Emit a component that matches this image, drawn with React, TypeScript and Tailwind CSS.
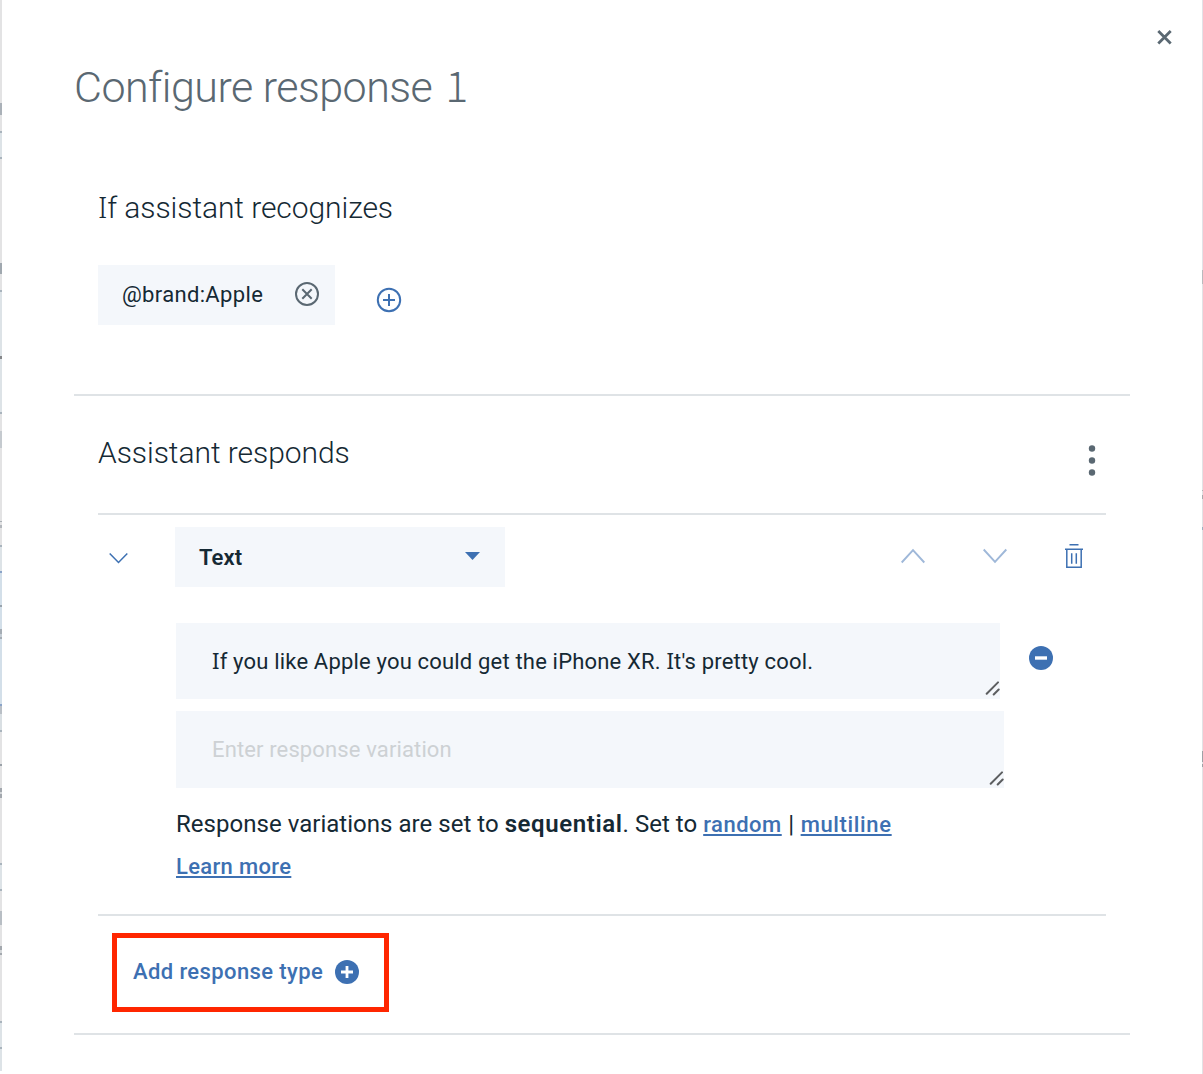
import React from "react";

const leftEdge: [number, string][] = [
  [103, "bg-[#e3e3e4]"], [12, "bg-[#aab1b8]"], [16, "bg-[#e3e3e4]"], [2, "bg-[#a9b4bd]"],
  [24, "bg-[#dde3e7]"], [2, "bg-[#a9b4bd]"], [104, "bg-[#e3e3e4]"], [11, "bg-[#a0a8af]"],
  [16, "bg-[#e3e3e4]"], [2, "bg-[#a9b4bd]"], [64, "bg-[#dde3e7]"], [3, "bg-[#85878a]"],
  [53, "bg-[#dde3e7]"], [2, "bg-[#a9b4bd]"], [17, "bg-[#e3e3e4]"], [17, "bg-[#c5cacf]"],
  [73, "bg-[#e3e3e4]"], [1, "bg-[#a9afb5]"], [3, "bg-[#e3e3e4]"], [3, "bg-[#b3b7bc]"],
  [17, "bg-[#e3e3e4]"], [2, "bg-[#a9b4bd]"], [24, "bg-[#dde3e7]"], [2, "bg-[#8aa3c8]"],
  [32, "bg-[#d3dfe9]"], [2, "bg-[#98a3ad]"], [22, "bg-[#d3dfe9]"], [5, "bg-[#a5adb5]"],
  [3, "bg-[#c5ced6]"], [2, "bg-[#a5adb5]"], [65, "bg-[#d3dfe9]"], [2, "bg-[#8aa3c8]"],
  [8, "bg-[#b9bfc6]"], [16, "bg-[#d9dfe3]"], [2, "bg-[#a9b4bd]"], [32, "bg-[#e3e3e4]"],
  [2, "bg-[#9aa1a8]"], [22, "bg-[#e3e3e4]"], [4, "bg-[#a3a8ae]"], [2, "bg-[#d5d8da]"],
  [4, "bg-[#a3a8ae]"], [65, "bg-[#e3e3e4]"], [2, "bg-[#a9b4bd]"], [24, "bg-[#dde3e7]"],
  [2, "bg-[#a9b4bd]"], [20, "bg-[#e3e3e4]"], [14, "bg-[#b8bec4]"], [21, "bg-[#e3e3e4]"],
  [4, "bg-[#a3a8ae]"], [3, "bg-[#d5d8da]"], [2, "bg-[#a3a8ae]"], [66, "bg-[#e3e3e4]"],
  [2, "bg-[#a9b4bd]"], [24, "bg-[#dde3e7]"], [2, "bg-[#a9b4bd]"], [22, "bg-[#dde3e7]"],
];

const rightEdge: [number, string][] = [
  [270, "bg-[#e2e2e7]"], [14, "bg-[#b9b9bd]"], [206, "bg-[#e2e2e5]"], [1, "bg-[#b3b3b6]"],
  [4, "bg-[#e2e2e5]"], [4, "bg-[#a9a9ad]"], [28, "bg-[#e2e2e5]"], [3, "bg-[#9bb0c0]"],
  [221, "bg-[#e2e2e5]"], [11, "bg-[#9da1a6]"], [2, "bg-[#e2e2e5]"], [3, "bg-[#9da1a6]"],
  [307, "bg-[#e2e2e5]"],
];

function Edge({ segments, className }: { segments: [number, string][]; className: string }) {
  return (
    <div className={`flex shrink-0 flex-col overflow-hidden ${className}`}>
      {segments.map(([height, color], i) => (
        <div key={i} className={`w-full shrink-0 ${color}`} style={{ height }} />
      ))}
    </div>
  );
}

function ResizeGrip() {
  return (
    <svg className="mb-[3px] self-end" width="16" height="16" viewBox="0 0 16 16" fill="none" stroke="#5c5e60" strokeWidth="2" strokeLinecap="round">
      <path d="M2.700 13.700 14 2.400M9.700 14.500l5-5" />
    </svg>
  );
}

export default function App() {
  return (
    <div className="flex h-[1074px] w-[1203px] overflow-hidden bg-white font-[Roboto,sans-serif] text-[#152934]">
      <Edge segments={leftEdge} className="w-[2px]" />

      <main className="flex w-[1200px] shrink-0 flex-col pl-[72px]">
        <header className="flex h-[187px] justify-between pr-[30px]">
          <h1 className="mt-[59px] h-14 text-[43px] leading-[56px] font-[350] tracking-[-0.52px] whitespace-nowrap text-[#5a6872]">
            Configure response <span className="ml-[3px] font-['Noto_Sans_CJK_JP',sans-serif] leading-none font-light">1</span>
          </h1>
          <button aria-label="Close" className="mt-[29px] h-4 w-4">
            <svg width="16" height="16" viewBox="0 0 16 16" fill="none" stroke="#5a6872" strokeWidth="2.800">
              <path d="M2.300 2l12.400 12.400M14.700 2 2.300 14.400" />
            </svg>
          </button>
        </header>

        <section className="flex h-[209px] w-[1056px] flex-col border-b-2 border-[#dfe3e6] pl-6">
          <h2 className="h-[78px] text-[30px] leading-[41px] font-[350] tracking-[-0.08px]">
            <span className="font-['Noto_Sans',sans-serif] leading-none">I</span>f assistant recognizes
          </h2>
          <div className="flex">
            <div className="flex h-[60px] w-[237px] items-center justify-between bg-[#f4f7fb] pr-[15px] pl-6">
              <span className="text-[22px] leading-6 tracking-[0.34px]">@brand:Apple</span>
              <svg className="mb-[2px]" width="26" height="26" viewBox="0 0 26 26" fill="none" stroke="#5a6872" strokeWidth="2">
                <circle cx="13" cy="13" r="11" />
                <path d="M8.300 8.300l9.400 9.400M17.700 8.300l-9.400 9.400" />
              </svg>
            </div>
            <svg className="mt-[22px] ml-[41px]" width="26" height="26" viewBox="0 0 26 26" fill="none" stroke="#3d70b2" strokeWidth="2">
              <circle cx="13" cy="13" r="11.200" />
              <path d="M13 7v12M7 13h12" />
            </svg>
          </div>
        </section>

        <section className="flex h-[639px] w-[1056px] flex-col border-b-2 border-[#dfe3e6] px-6">
          <div className="flex h-[119px] shrink-0 justify-between border-b-2 border-[#dfe3e6] pt-9 pr-[10px]">
            <h2 className="h-10 text-[30px] leading-[41px] font-[350] tracking-[-0.05px]">Assistant responds</h2>
            <svg className="mt-[12px]" width="8" height="34" viewBox="0 0 8 34" fill="#5a6872">
              <circle cx="4" cy="4.500" r="3.200" />
              <circle cx="4" cy="16.500" r="3.200" />
              <circle cx="4" cy="28.500" r="3.200" />
            </svg>
          </div>

          <div className="mt-3 flex h-[60px] shrink-0">
            <svg className="mt-[24px] ml-[10px]" width="20" height="14" viewBox="0 0 20 14" fill="none" stroke="#3d70b2" strokeWidth="1.500">
              <path d="M1.700 2.500l8.800 9 8.800-9" />
            </svg>
            <div className="ml-[47px] flex w-[330px] justify-between bg-[#f4f7fb] pr-6 pl-6">
              <span className="text-[22px] leading-[61px] font-semibold tracking-[0.1px]">Text</span>
              <svg className="mt-[25px]" width="17" height="9" viewBox="0 0 17 9" fill="#3d70b2">
                <path d="M1 0h15L8.500 8z" />
              </svg>
            </div>
            <svg className="mt-[20px] ml-[395px]" width="26" height="18" viewBox="0 0 26 18" fill="none" stroke="#9fb8d9" strokeWidth="1.900">
              <path d="M1.700 15.500 13 3.200l11.300 12.300" />
            </svg>
            <svg className="mt-[20px] ml-[56px]" width="26" height="18" viewBox="0 0 26 18" fill="none" stroke="#9fb8d9" strokeWidth="1.900">
              <path d="M1.700 2.500 13 14.800 24.300 2.500" />
            </svg>
            <svg className="mt-[16px] ml-[56px]" width="20" height="26" viewBox="0 0 20 26" fill="none" stroke="#3d70b2" strokeWidth="1.500">
              <path d="M5.500 1.800h9M1 6.200h18M2.800 6.200v18h14.400v-18M7.700 10.200v10.500M12.300 10.200v10.500" />
            </svg>
          </div>

          <div className="mt-9 ml-[78px] flex h-[76px] shrink-0">
            <div className="flex w-[824px] justify-between bg-[#f4f7fb] pl-9">
              <p className="text-[22px] leading-[77px] tracking-[0.18px] whitespace-nowrap">
                <span className="font-['Noto_Sans',sans-serif] leading-none">I</span>f you like Apple you could get the iPhone XR.{" "}
                <span className="font-['Noto_Sans',sans-serif] leading-none">I</span>t's pretty cool.
              </p>
              <ResizeGrip />
            </div>
            <svg className="mt-[23px] ml-[29px]" width="24" height="24" viewBox="0 0 24 24">
              <circle cx="12" cy="12" r="12" fill="#3d70b2" />
              <path d="M6 12h12" stroke="#fff" strokeWidth="3.400" />
            </svg>
          </div>

          <div className="mt-3 ml-[78px] flex h-[77px] w-[828px] shrink-0 justify-between bg-[#f4f7fb] pl-9">
            <p className="text-[22px] leading-[77px] tracking-[0.13px] text-[#cdd1d4]">Enter response variation</p>
            <div className="-mb-px flex self-end"><ResizeGrip /></div>
          </div>

          <p className="mt-5 ml-[78px] h-8 shrink-0 text-[24px] leading-8 tracking-[0.03px] whitespace-nowrap">
            Response variations are set to <b className="font-semibold tracking-[0.6px]">sequential</b>. Set to{" "}
            <a className="text-[22px] leading-none font-medium tracking-[0.5px] text-[#3d70b2] underline decoration-[1.5px] underline-offset-[2px] [text-decoration-skip-ink:none]">random</a>
            <span className="mx-[6.500px]">|</span>
            <a className="text-[22px] leading-none font-medium tracking-[0.65px] text-[#3d70b2] underline decoration-[1.5px] underline-offset-[2px] [text-decoration-skip-ink:none]">multiline</a>
          </p>
          <div className="mt-[11px] ml-[78px] h-8 shrink-0 text-[22px] leading-8 font-medium tracking-[0.33px] text-[#3d70b2]">
            <a className="underline decoration-[1.5px] underline-offset-[2px] [text-decoration-skip-ink:none]">Learn more</a>
          </div>

          <div className="mt-[31px] flex border-t-2 border-[#dfe3e6] pt-[17px]">
            <button className="ml-[14px] flex h-[79px] w-[277px] items-center border-[5px] border-[#ff2600] pb-[2px] pl-4 text-[#3d70b2]">
              <span className="text-[22px] leading-7 font-medium tracking-[0.39px]">Add response type</span>
              <svg className="ml-3" width="24" height="24" viewBox="0 0 24 24">
                <circle cx="12" cy="12" r="12" fill="#3d70b2" />
                <path d="M6 12h12M12 6v12" stroke="#fff" strokeWidth="2.800" />
              </svg>
            </button>
          </div>
        </section>
      </main>

      <Edge segments={rightEdge} className="w-px" />
    </div>
  );
}
